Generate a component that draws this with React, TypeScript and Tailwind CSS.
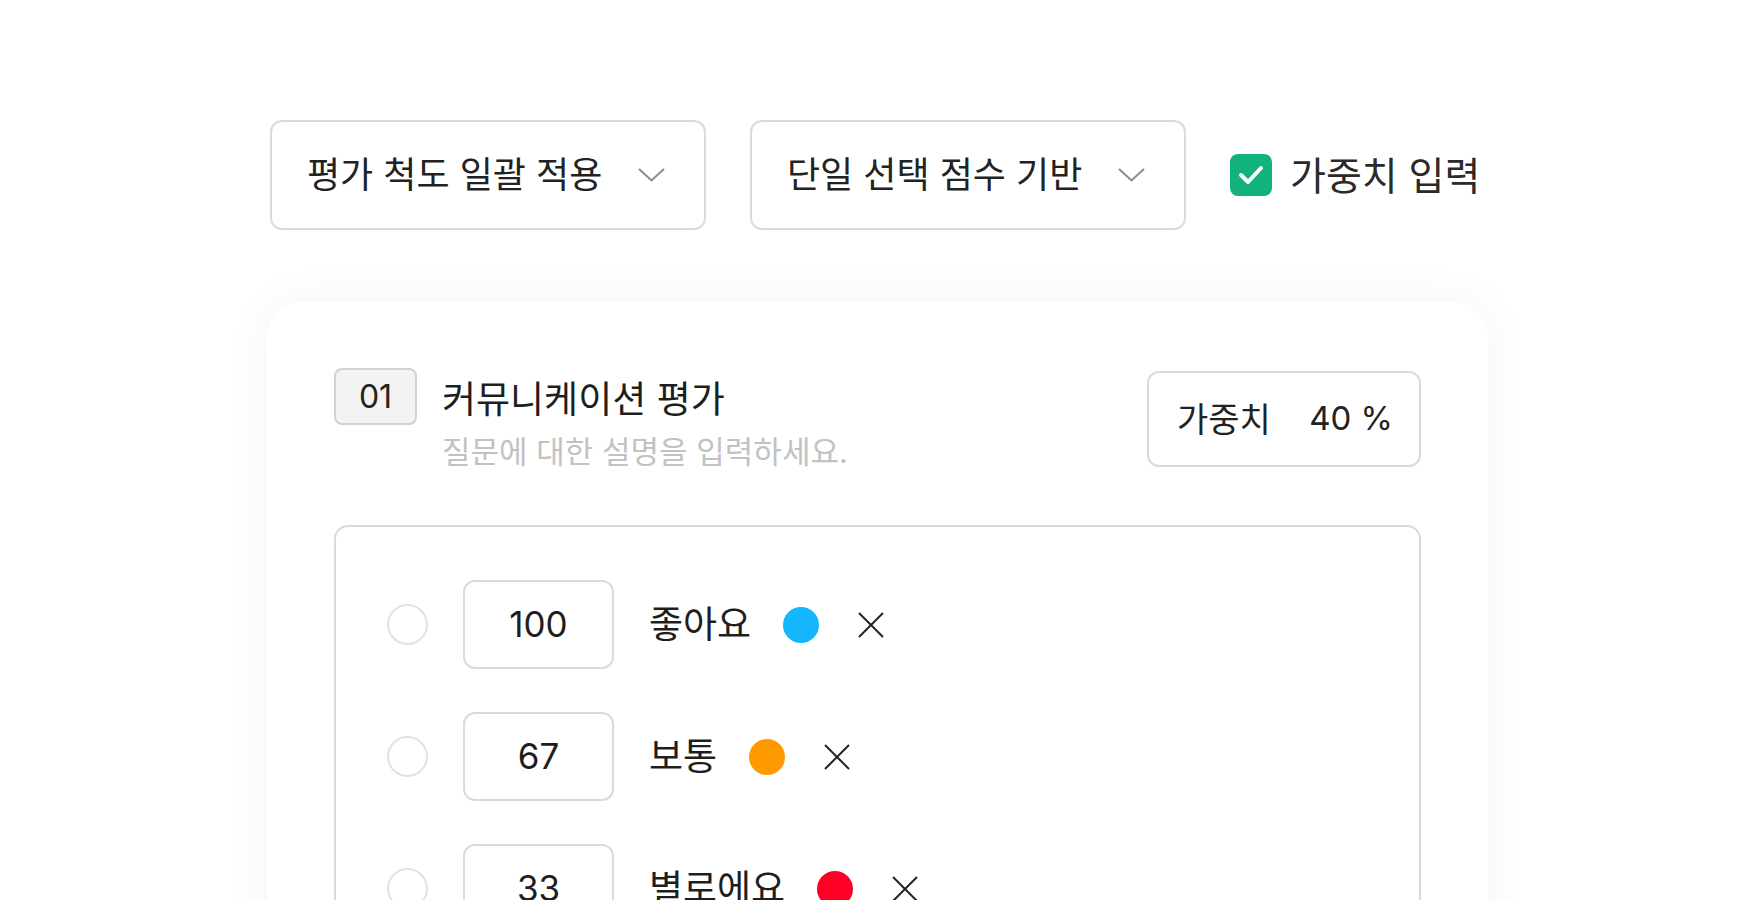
const font = { fontFamily: 'Inter, "Noto Sans CJK KR", "Noto Sans", sans-serif' };

const options = [
  { score: 100, label: "좋아요", color: "bg-[#15b6fc]" },
  { score: 67, label: "보통", color: "bg-[#fe9a00]" },
  { score: 33, label: "별로에요", color: "bg-[#fe0025]" },
  { score: 0, label: "싫어요", color: "bg-[#8b5cf6]" },
];

function Chevron() {
  return (
    <svg width="27" height="14" viewBox="0 0 27 14" fill="none">
      <polyline points="1,1 13.5,12.5 26,1" stroke="#8a8a8a" strokeWidth="2" />
    </svg>
  );
}

function Select({ label }: { label: string }) {
  return (
    <div className="flex h-[110px] w-[436px] items-center justify-between rounded-[12px] border-2 border-[#dadada] pl-[35px] pr-[39px]">
      <span className="text-[36px] leading-none text-[#222]">{label}</span>
      <Chevron />
    </div>
  );
}

function CloseIcon() {
  return (
    <svg width="26" height="26" viewBox="0 0 26 26" fill="none">
      <line x1="1" y1="1" x2="25" y2="25" stroke="#222" strokeWidth="2" />
      <line x1="25" y1="1" x2="1" y2="25" stroke="#222" strokeWidth="2" />
    </svg>
  );
}

export default function App() {
  return (
    <div className="min-h-screen bg-white" style={font}>
      <div className="pl-[270px] pt-[120px]">
        <div className="flex items-center gap-[44px]">
          <Select label="평가 척도 일괄 적용" />
          <Select label="단일 선택 점수 기반" />
          <div className="flex items-center gap-[18px]">
            <div className="flex h-[42px] w-[42px] items-center justify-center rounded-[8px] bg-[#13b27b]">
              <svg width="26" height="20" viewBox="0 0 26 20" fill="none">
                <polyline points="3,10 10,17 23,3" stroke="#fff" strokeWidth="4" strokeLinecap="round" strokeLinejoin="round" />
              </svg>
            </div>
            <span className="text-[39px] leading-none text-[#2a2a2a]">가중치 입력</span>
          </div>
        </div>

        <div className="-ml-[3px] mt-[72px] w-[1221px] rounded-[34px] bg-white px-[67px] pb-[120px] pt-[66px] shadow-[0_0_48px_rgba(0,0,0,0.05)]">
          <div className="flex items-start justify-between">
            <div className="flex items-start gap-[25px]">
              <div className="flex h-[57px] w-[83px] items-center justify-center rounded-[8px] border-2 border-[#d2d2d2] bg-[#f3f3f3] text-[32px] text-[#222]">
                01
              </div>
              <div className="mt-[10px] flex flex-col">
                <span className="text-[37px] leading-[44px] text-[#1e1e1e]">커뮤니케이션 평가</span>
                <span className="mt-[12px] text-[31px] leading-[36px] text-[#c2c2c2]">질문에 대한 설명을 입력하세요.</span>
              </div>
            </div>
            <div className="mt-[3px] flex h-[96px] w-[274px] items-center justify-between rounded-[12px] border-2 border-[#dadada] pl-[28px] pr-[26px] text-[#222]">
              <span className="text-[34px]">가중치</span>
              <span className="text-[33px]">40 %</span>
            </div>
          </div>

          <div className="mt-[55px] flex flex-col gap-[43px] rounded-[14px] border-2 border-[#dadada] px-[51px] pb-[51px] pt-[53px]">
            {options.map((o) => (
              <div key={o.label} className="flex items-center">
                <div className="h-[41px] w-[41px] rounded-full border-2 border-[#e2e2e2]" />
                <div className="ml-[35px] flex h-[89px] w-[151px] items-center justify-center rounded-[12px] border-2 border-[#dadada] text-[35px] text-[#1e1e1e]">
                  {o.score}
                </div>
                <span className="ml-[35px] text-[37px] leading-none text-[#1e1e1e]">{o.label}</span>
                <div className={`ml-[32px] h-[36px] w-[36px] rounded-full ${o.color}`} />
                <div className="ml-[39px]">
                  <CloseIcon />
                </div>
              </div>
            ))}
          </div>
        </div>
      </div>
    </div>
  );
}
